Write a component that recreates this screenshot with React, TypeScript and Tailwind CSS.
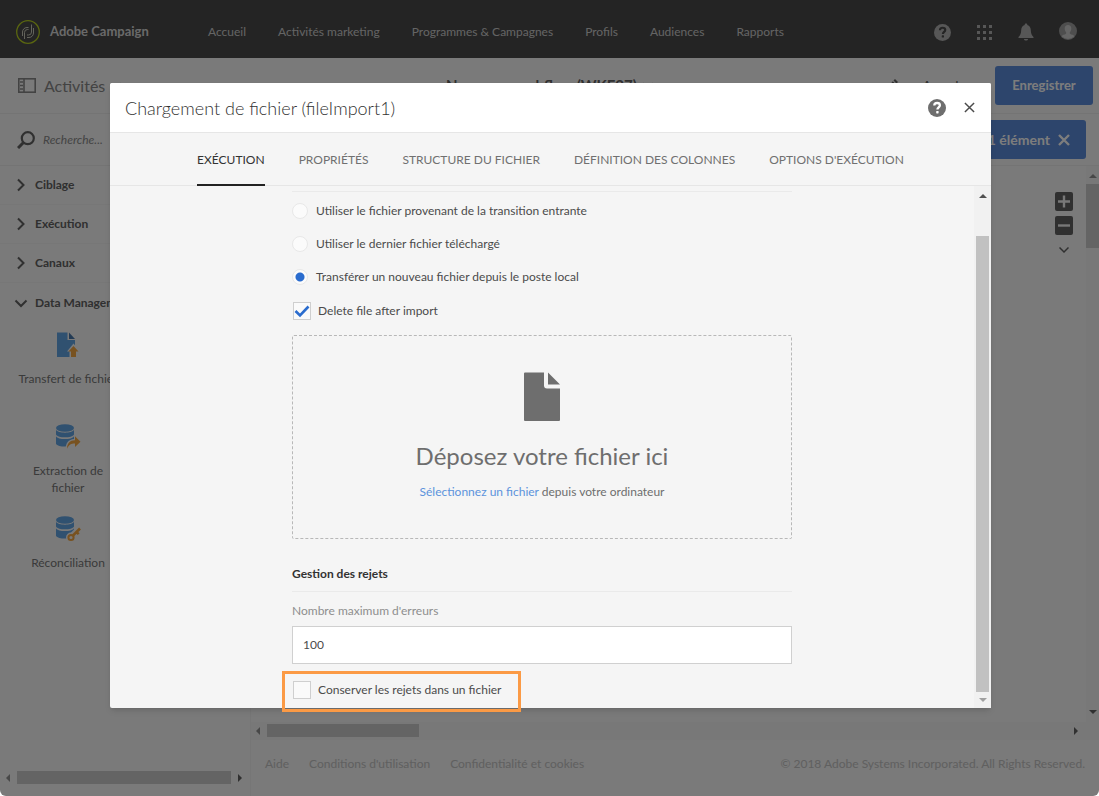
import type { ReactNode } from 'react';

const navItems = ['Accueil', 'Activités marketing', 'Programmes & Campagnes', 'Profils', 'Audiences', 'Rapports'];
const tabs = ['Exécution', 'Propriétés', 'Structure du fichier', 'Définition des colonnes', "Options d'exécution"];
const sections = ['Ciblage', 'Exécution', 'Canaux'];
const footerLinks = ["Aide", "Conditions d'utilisation", 'Confidentialité et cookies'];

function HelpIcon({ size, mark }: { size: number; mark: string }) {
  return (
    <svg width={size} height={size} viewBox="0 0 18 18" aria-hidden="true">
      <circle cx="9" cy="9" r="9" fill="currentColor" />
      <path d="M6.300 6.600C6.300 4.900 7.500 4 9.100 4c1.600 0 2.800.9 2.800 2.300 0 2-2.500 2.200-2.500 4.300" fill="none" stroke={mark} strokeWidth="2.300" />
      <rect x="8.200" y="12" width="2.400" height="2.400" rx="0.600" fill={mark} />
    </svg>
  );
}

function CloseIcon({ size, width }: { size: number; width: number }) {
  return (
    <svg width={size} height={size} viewBox="0 0 12 12" aria-hidden="true">
      <path d="M1 1l10 10M11 1L1 11" stroke="currentColor" strokeWidth={width} fill="none" />
    </svg>
  );
}

function Chevron({ down = false }: { down?: boolean }) {
  return (
    <svg width="14" height="14" viewBox="0 0 14 14" fill="none" stroke="currentColor" strokeWidth="2" aria-hidden="true">
      <path d={down ? 'M1.500 4.500L7 10l5.500-5.500' : 'M4 1.500L9.500 7 4 12.500'} />
    </svg>
  );
}

function Arrow({ dir, className }: { dir: 'up' | 'down' | 'left' | 'right'; className: string }) {
  const d = {
    up: 'M0 6l4-4 4 4z',
    down: 'M0 2l4 4 4-4z',
    left: 'M6 0L2 4l4 4z',
    right: 'M2 0l4 4-4 4z',
  }[dir];
  return (
    <svg width="8" height="8" viewBox="0 0 8 8" className={className} aria-hidden="true">
      <path d={d} fill="currentColor" />
    </svg>
  );
}

function Database() {
  return (
    <g fill="#60a2e0">
      <ellipse cx="9" cy="4" rx="9" ry="3.800" />
      <path d="M0 5.800C2 9.600 16 9.600 18 5.800V10.500c-2 3.800-16 3.800-18 0z" />
      <path d="M0 12.200c2 3.800 16 3.800 18 0v7.500c-2 3.800-16 3.800-18 0z" />
    </g>
  );
}

function TransferIcon() {
  return (
    <svg width="22" height="26" viewBox="0 0 22 26" aria-hidden="true">
      <path d="M0 0.500h10.500v7.500H18V25H0z" fill="#60a2e0" />
      <path d="M12 0.500V7h6z" fill="#4474a8" />
      <path d="M16.500 11.500l6.500 8h-3V26h-7.500v-6.500H10z" fill="#f4f4f4" />
      <path d="M16.500 14l5 5.500H19V25h-5v-5.500h-2.500z" fill="#f0a440" />
    </svg>
  );
}

function ExtractIcon() {
  return (
    <svg width="25" height="26" viewBox="0 0 25 26" aria-hidden="true">
      <Database />
      <path d="M9.500 26c0-7 3-10.500 8.500-11v-4l7 6v2l-7 5-4 2z" fill="#f4f4f4" />
      <path d="M11 24.800c0-5.500 3-8.600 8-8.600v-3.900l5.500 5.500-5.500 5.200v-3.400c-4 0-6 1.200-8 5.200z" fill="#f0a440" />
    </svg>
  );
}

function ReconcileIcon() {
  return (
    <svg width="25" height="26" viewBox="0 0 25 26" aria-hidden="true">
      <Database />
      <circle cx="15" cy="21.500" r="5" fill="#f4f4f4" />
      <path d="M16 19l8-8" stroke="#f4f4f4" strokeWidth="5" />
      <g fill="none" stroke="#f0a440">
        <circle cx="15" cy="21.500" r="2.600" strokeWidth="2" />
        <path d="M17 19.500l7-7M20.500 16l2.200 2.200" strokeWidth="2.600" />
      </g>
    </svg>
  );
}

function Activity({ icon, label }: { icon: ReactNode; label: string }) {
  return (
    <li className="flex h-[92px] w-[116px] flex-col items-center gap-3">
      {icon}
      <span className="text-center text-xs leading-[17px] whitespace-pre-line text-[#747474]">{label}</span>
    </li>
  );
}

function Background() {
  return (
    <div className="flex min-h-screen flex-col bg-[#f4f4f4]">
      <header className="flex h-[58px] items-center bg-[#484848] pt-[6px] pr-[22px] pl-4">
        <svg width="24" height="24" viewBox="0 0 24 24" fill="none" aria-hidden="true">
          <circle cx="12" cy="12" r="11.300" stroke="#b4cc20" strokeWidth="1.300" />
          <g stroke="#c8c8b8" strokeWidth="1">
            <path d="M6.500 16v-4A4.500 4.500 0 0 1 11 7.500h1.500M8.500 19v-6.500a3 3 0 0 1 3-3h1" />
            <path d="M17.500 8v5a4.500 4.500 0 0 1-4.500 4.500h-2M15.500 4.500V12a3 3 0 0 1-3 3h-1.500" />
          </g>
        </svg>
        <span className="ml-[10px] w-[158px] text-[13px] font-bold text-[#d4d4d4]">Adobe Campaign</span>
        <nav className="flex flex-1 gap-8 text-xs text-[#c8c8c8]">
          {navItems.map((item) => (
            <a key={item} href="#" className="whitespace-nowrap">{item}</a>
          ))}
        </nav>
        <div className="flex items-center gap-[25px] text-[#aeaeae]">
          <button aria-label="Aide"><HelpIcon size={17} mark="#484848" /></button>
          <button aria-label="Solutions">
            <svg width="17" height="17" viewBox="0 0 17 17" fill="currentColor" aria-hidden="true">
              {[0, 6, 12].flatMap((y) => [0, 6, 12].map((x) => <rect key={`${x}-${y}`} x={x + 1} y={y + 1} width="3" height="3" />))}
            </svg>
          </button>
          <button aria-label="Notifications">
            <svg width="16" height="18" viewBox="0 0 16 18" fill="currentColor" aria-hidden="true">
              <path d="M8 0.500c1 0 1.400.7 1.300 1.500 2.500.7 3.400 2.700 3.500 5.300.1 3.500 1 5.200 2.700 6.700v1H.5v-1c1.700-1.500 2.600-3.200 2.700-6.700C3.300 4.700 4.200 2.700 6.700 2 6.600 1.200 7 .5 8 .5zM6 16h4c0 2-4 2-4 0z" />
            </svg>
          </button>
          <button aria-label="Profil" className="mb-[3px]">
            <svg width="18" height="18" viewBox="0 0 18 18" aria-hidden="true">
              <circle cx="9" cy="9" r="9" fill="#9c9c9c" />
              <path d="M9 3c2.200 0 3.400 1.600 3.300 3.800-.1 1.900-.9 3-1.500 3.700-.2 1.100.3 1.400 2.700 2.300 1 .4 1.500.9 1.700 1.700a9 9 0 0 1-12.400 0c.2-.8.7-1.300 1.700-1.700 2.400-.9 2.900-1.200 2.700-2.300-.6-.7-1.400-1.800-1.500-3.700C5.600 4.600 6.800 3 9 3z" fill="#cacaca" />
            </svg>
          </button>
        </div>
      </header>

      <div className="flex h-14 items-center border-b border-[#e8e8e8] pr-[6px] pl-[18px]">
        <svg width="18" height="15" viewBox="0 0 18 15" fill="none" stroke="#868686" aria-hidden="true">
          <rect x="0.800" y="0.800" width="16.400" height="13.400" strokeWidth="1.600" />
          <path d="M6 1v13" strokeWidth="1.600" />
          <path d="M2 4h3M2 7.500h3M2 11h3" strokeWidth="1.600" />
        </svg>
        <h1 className="ml-2 flex w-[402px] items-center gap-1 text-base text-[#868686]">
          Activités <Chevron down />
        </h1>
        <h2 className="flex flex-1 items-center gap-1 text-[15px] font-bold whitespace-nowrap text-[#606060]">
          Nouveau workflow (WKF27) <Chevron down />
        </h2>
        <svg width="12" height="14" viewBox="0 0 12 14" fill="#606060" aria-hidden="true">
          <path d="M9 0l3 3-1.500 1.500-3-3zM6.800 2.200l3 3L3.500 11.500 0 13l1-3.800z" />
        </svg>
        <button className="mx-6 text-sm text-[#606060]">Annuler</button>
        <button className="h-[39px] w-[98px] rounded-[3px] bg-[#5a8ad8] text-[13px] font-bold text-[#fafafa]">Enregistrer</button>
      </div>

      <div className="flex flex-1">
        <aside className="flex w-[251px] flex-col border-r border-[#ececec] pb-3">
          <label className="flex h-[52px] items-center gap-2 border-b border-[#e8e8e8] pl-[17px]">
            <svg width="18" height="18" viewBox="0 0 18 18" fill="none" stroke="#606060" aria-hidden="true">
              <circle cx="10.800" cy="7.200" r="6" strokeWidth="2.200" />
              <path d="M6.500 11.500L1 17" strokeWidth="3" />
            </svg>
            <input type="search" aria-label="Recherche" placeholder="Recherche..." className="w-32 text-xs italic outline-none placeholder:text-[#888888]" />
          </label>
          {sections.map((section) => (
            <button key={section} className="flex h-[39px] items-center gap-[7px] border-b border-[#eeeeee] pl-[14px] text-xs font-bold text-[#606060]">
              <Chevron />
              {section}
            </button>
          ))}
          <button className="flex h-[39px] items-center gap-[7px] pl-[14px] text-xs font-bold text-[#606060]">
            <Chevron down />
            Data Management
          </button>
          <ul className="mt-[10px] flex flex-1 flex-col pl-[10px]">
            <Activity icon={<TransferIcon />} label="Transfert de fichier" />
            <Activity icon={<ExtractIcon />} label={'Extraction de\nfichier'} />
            <Activity icon={<ReconcileIcon />} label="Réconciliation" />
          </ul>
          <div className="flex items-center gap-[5px] pl-1">
            <Arrow dir="left" className="text-[#909090]" />
            <div className="h-[13px] w-[214px] bg-[#c8c8c8]" />
            <Arrow dir="right" className="text-[#606060]" />
          </div>
        </aside>

        <div className="flex min-w-0 flex-1 flex-col">
          <div className="flex h-[52px] items-center justify-end border-b border-[#e8e8e8] pr-[13px]">
            <button className="flex h-[39px] items-center gap-2 rounded-[3px] bg-[#5a8ad8] px-4 text-sm font-bold text-[#fafafa]">
              1 élément <CloseIcon size={12} width={2.400} />
            </button>
          </div>
          <div className="flex flex-1">
            <div className="flex flex-1 flex-col items-end gap-[5px] pt-[26px] pr-[13px] text-[#606060]">
              <button aria-label="Zoom avant">
                <svg width="18" height="19" viewBox="0 0 18 19" aria-hidden="true">
                  <rect width="18" height="19" rx="2" fill="#606060" />
                  <path d="M9 3.500v12M3 9.500h12" stroke="#f0f0f0" strokeWidth="2.400" />
                </svg>
              </button>
              <button aria-label="Zoom arrière">
                <svg width="18" height="19" viewBox="0 0 18 19" aria-hidden="true">
                  <rect width="18" height="19" rx="2" fill="#606060" />
                  <path d="M3 9.500h12" stroke="#f0f0f0" strokeWidth="2.400" />
                </svg>
              </button>
              <button aria-label="Développer" className="mt-1 mr-1">
                <svg width="10" height="12" viewBox="0 0 10 12" fill="none" stroke="currentColor" strokeWidth="1.500" aria-hidden="true">
                  <path d="M0.500 3.500L5 8l4.500-4.500" />
                </svg>
              </button>
            </div>
            <div className="flex w-[13px] flex-col items-center bg-[#f0f0f0] py-[6px]">
              <Arrow dir="up" className="text-[#909090]" />
              <div className="mt-1 h-16 w-full bg-[#c8c8c8]" />
              <Arrow dir="down" className="mt-auto text-[#606060]" />
            </div>
          </div>
          <div className="flex h-[17px] items-center bg-[#f0f0f0] pr-[19px] pl-[3px]">
            <Arrow dir="left" className="text-[#909090]" />
            <div className="ml-[5px] h-[13px] w-[152px] bg-[#c8c8c8]" />
            <Arrow dir="right" className="ml-auto text-[#606060]" />
          </div>
          <footer className="flex h-[57px] items-center gap-5 border-t border-[#f0f0f0] px-[14px] pb-2 text-xs text-[#c0c0c0]">
            {footerLinks.map((item) => (
              <a key={item} href="#">{item}</a>
            ))}
            <span className="ml-auto">© 2018 Adobe Systems Incorporated. All Rights Reserved.</span>
          </footer>
        </div>
      </div>
    </div>
  );
}

function Radio({ label, checked = false }: { label: string; checked?: boolean }) {
  return (
    <label className="flex h-[33px] items-center gap-2">
      <input
        type="radio"
        name="source"
        defaultChecked={checked}
        className="size-4 appearance-none rounded-full border border-[#e8e8e8] bg-[#fbfbfb] bg-[radial-gradient(circle,#2a6cce_4px,transparent_5px)] not-checked:bg-none"
      />
      {label}
    </label>
  );
}

function Checkbox({ label, checked = false }: { label: string; checked?: boolean }) {
  return (
    <label className="flex h-9 items-center gap-[7px] pl-px">
      <span className="grid">
        <input type="checkbox" defaultChecked={checked} className="peer col-start-1 row-start-1 size-[18px] appearance-none border border-[#cfcfcf] bg-[#fafafa]" />
        <svg
          width="18"
          height="18"
          viewBox="0 0 18 18"
          fill="none"
          stroke="#2a6cce"
          strokeWidth="2.600"
          className="pointer-events-none invisible col-start-1 row-start-1 peer-checked:visible"
          aria-hidden="true"
        >
          <path d="M2.500 9l4.500 4.500L15.500 4.500" />
        </svg>
      </span>
      {label}
    </label>
  );
}

function Dialog() {
  return (
    <section role="dialog" aria-labelledby="dialog-title" className="flex flex-1 flex-col rounded-xs bg-[#f5f5f5] text-xs text-[#4b4b4b] shadow-md">
      <header className="flex h-[50px] items-center rounded-t-xs border-b border-[#e6e6e6] bg-white pr-4 pl-[15px]">
        <h2 id="dialog-title" className="flex-1 text-lg font-light text-[#323232]">Chargement de fichier (fileImport1)</h2>
        <button aria-label="Aide" className="text-[#6e6e6e]"><HelpIcon size={18} mark="#ffffff" /></button>
        <button aria-label="Fermer" className="ml-[18px] text-[#4b4b4b]"><CloseIcon size={11} width={1.600} /></button>
      </header>
      <nav role="tablist" className="flex h-[53px] justify-center gap-[34px] border-b border-[#e6e6e6]">
        {tabs.map((tab, i) => (
          <button
            key={tab}
            role="tab"
            aria-selected={i === 0}
            className="-mb-px border-b-2 border-transparent pt-[2px] uppercase whitespace-nowrap text-[#707070] aria-selected:border-[#222222] aria-selected:text-[#323232]"
          >
            {tab}
          </button>
        ))}
      </nav>
      <div className="flex">
        <form className="mx-auto w-[500px] pt-[5px]">
          <div className="flex flex-col border-t border-[#eaeaea] pt-[2px]">
            <Radio label="Utiliser le fichier provenant de la transition entrante" />
            <Radio label="Utiliser le dernier fichier téléchargé" />
            <Radio label="Transférer un nouveau fichier depuis le poste local" checked />
            <Checkbox label="Delete file after import" checked />
          </div>
          <div className="mt-[6px] flex h-[204px] flex-col items-center rounded-xs border border-dashed border-[#b8b8b8] pt-9">
            <svg width="36" height="50" viewBox="0 0 36 50" fill="#6e6e6e" aria-hidden="true">
              <path d="M1 0.500h19v13q0 3 3 3h13v31.500q0 1-1 1H1q-1 0-1-1v-46.500q0-1 1-1z" />
              <path d="M24 0.500v12h12z" />
            </svg>
            <p className="mt-[18px] text-2xl leading-8 text-[#6e6e6e]">Déposez votre fichier ici</p>
            <p className="mt-3 text-[#6e6e6e]">
              <a href="#" className="text-[#5c93dc]">Sélectionnez un fichier</a> depuis votre ordinateur
            </p>
          </div>
          <h3 className="mt-6 border-b border-[#eaeaea] pb-[6px] leading-[22px] font-bold text-[#323232]">Gestion des rejets</h3>
          <label htmlFor="max-errors" className="mt-2 block leading-[22px] text-[#8e8e8e]">Nombre maximum d'erreurs</label>
          <input id="max-errors" type="text" defaultValue="100" className="mt-1 block h-[38px] w-full border border-[#d0d0d0] bg-white px-[10px] pb-[2px]" />
          <div className="relative mt-2 w-fit">
            <Checkbox label="Conserver les rejets dans un fichier" />
            <div className="pointer-events-none absolute -top-px -right-5 -bottom-1 -left-[10px] border-3 border-[#fb9a45]" />
          </div>
        </form>
        <div className="flex w-[17px] flex-col items-center bg-[#f1f1f1] pt-[6px] pb-1">
          <Arrow dir="up" className="text-[#505050]" />
          <div className="mt-9 w-[13px] flex-1 bg-[#c1c1c1]" />
          <Arrow dir="down" className="mt-1 text-[#a0a0a0]" />
        </div>
      </div>
    </section>
  );
}

export default function App() {
  return (
    <main className="relative min-h-screen overflow-hidden rounded-b-md font-['Lato',sans-serif]">
      <Background />
      <div className="absolute inset-0 flex items-start bg-black/50 pt-[83px] pr-[108px] pl-[110px]">
        <Dialog />
      </div>
    </main>
  );
}
